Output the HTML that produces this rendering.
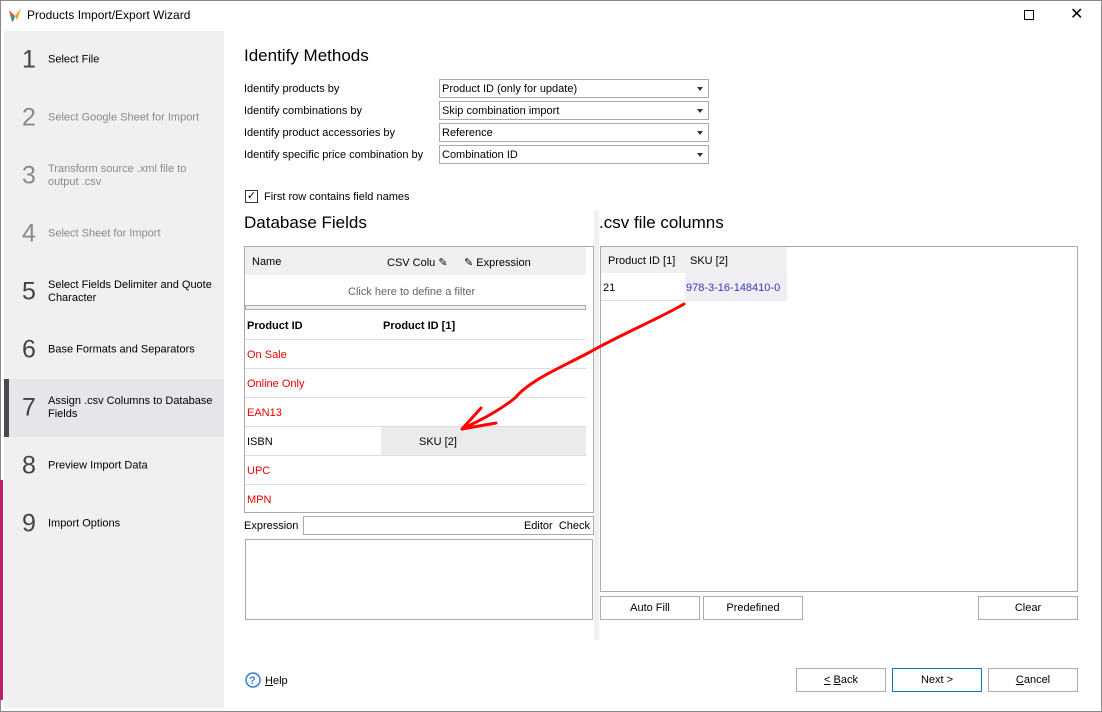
<!DOCTYPE html><html><head><style>
*{margin:0;padding:0;box-sizing:border-box}
body{width:1102px;height:712px;position:relative;background:#fff;font-family:"Liberation Sans",Tahoma,sans-serif;font-size:11px;color:#000;overflow:hidden}
.a{position:absolute}
.side{left:4px;top:31px;width:220px;height:677px;background:#f0f0f0}
.st{position:absolute;left:0;width:220px;height:52px}
.st .n{position:absolute;left:18px;font-size:25px;color:#444;top:50%;transform:translateY(-50%)}
.st .t{position:absolute;left:44px;top:50%;transform:translateY(-50%);font-size:11px;line-height:13px;width:172px}
.dis .n,.dis .t{color:#8a8a8a}
.dd{position:absolute;left:439px;width:270px;height:19px;border:1px solid #aaa;padding:3px 0 0 2px;font-size:11px}
.dd:after{content:"";position:absolute;right:5px;top:7px;border:3px solid transparent;border-top:4px solid #333}
.lbl{position:absolute;left:244px;font-size:11px}
.row{position:absolute;left:245px;width:341px;height:29px;border-bottom:1px solid #ddd}
.row span{position:absolute;left:2px;top:9px}
.red{color:#e00}
.btn{position:absolute;height:24px;border:1px solid #adadad;background:#fff;text-align:center;line-height:23px;font-size:11px}
</style></head><body>
<div class="a" style="left:0;top:0;width:1102px;height:712px;border:1px solid #888"></div>
<svg class="a" style="left:8px;top:7px" width="14" height="16" viewBox="0 0 14 16"><path d="M1 3 L7 9 L4 15 Z" fill="#e85030"/><path d="M13 1 L7 9 L9 13 Z" fill="#f0a020"/><path d="M2 8 L7 10 L5 15Z" fill="#20a0a0"/></svg>
<div class="a" style="left:27px;top:8px;font-size:12px">Products Import/Export Wizard</div>
<div class="a" style="left:1024px;top:10px;width:10px;height:10px;border:1px solid #000"></div>
<div class="a" style="left:1070px;top:4px;font-size:16px">✕</div>
<div class="a" style="left:0;top:480px;width:3px;height:220px;background:#c0206a"></div>
<div class="a side">
<div class="st" style="top:3px"><span class="n">1</span><span class="t">Select File</span></div>
<div class="st dis" style="top:61px"><span class="n">2</span><span class="t">Select Google Sheet for Import</span></div>
<div class="st dis" style="top:119px"><span class="n">3</span><span class="t" style="width:150px">Transform source .xml file to output .csv</span></div>
<div class="st dis" style="top:177px"><span class="n">4</span><span class="t">Select Sheet for Import</span></div>
<div class="st" style="top:235px"><span class="n">5</span><span class="t">Select Fields Delimiter and Quote Character</span></div>
<div class="st" style="top:293px"><span class="n">6</span><span class="t">Base Formats and Separators</span></div>
<div class="st" style="top:348px;height:58px;background:#e6e6ea;border-left:5px solid #4a4a55"><span class="n" style="left:13px">7</span><span class="t" style="left:39px">Assign .csv Columns to Database Fields</span></div>
<div class="st" style="top:409px"><span class="n">8</span><span class="t">Preview Import Data</span></div>
<div class="st" style="top:467px"><span class="n">9</span><span class="t">Import Options</span></div>
</div>
<div class="a" style="left:244px;top:46px;font-size:17px">Identify Methods</div>
<div class="lbl" style="top:83px">Identify products by</div>
<div class="lbl" style="top:105px">Identify combinations by</div>
<div class="lbl" style="top:127px">Identify product accessories by</div>
<div class="lbl" style="top:149px">Identify specific price combination by</div>
<div class="dd" style="top:79px">Product ID (only for update)</div>
<div class="dd" style="top:101px">Skip combination import</div>
<div class="dd" style="top:123px">Reference</div>
<div class="dd" style="top:145px">Combination ID</div>
<div class="a" style="left:245px;top:190px;width:13px;height:13px;border:1px solid #333;font-size:11px;line-height:11px;text-align:center">✓</div>
<div class="a" style="left:264px;top:191px">First row contains field names</div>
<div class="a" style="left:244px;top:213px;font-size:17px">Database Fields</div>
<div class="a" style="left:599px;top:213px;font-size:17px">.csv file columns</div>
<div class="a" style="left:244px;top:246px;width:350px;height:267px;border:1px solid #aaa"></div>
<div class="a" style="left:245px;top:247px;width:341px;height:28px;background:#f0f0f0"></div>
<div class="a" style="left:252px;top:256px">Name</div>
<div class="a" style="left:387px;top:256px">CSV Colu ✎</div>
<div class="a" style="left:464px;top:256px">✎ Expression</div>
<div class="a" style="left:348px;top:286px;color:#666">Click here to define a filter</div>
<div class="a" style="left:245px;top:305px;width:341px;height:5px;border:1px solid #aaa;background:#f0f0f0"></div>
<div class="row" style="top:311px"><span style="font-weight:bold">Product ID</span><span style="left:138px;font-weight:bold">Product ID [1]</span></div>
<div class="row" style="top:340px"><span class="red">On Sale</span></div>
<div class="row" style="top:369px"><span class="red">Online Only</span></div>
<div class="row" style="top:398px"><span class="red">EAN13</span></div>
<div class="row" style="top:427px"><span>ISBN</span><div class="a" style="left:136px;top:0;width:205px;height:28px;background:#ebebeb"></div><span style="left:174px">SKU [2]</span></div>
<div class="row" style="top:456px"><span class="red">UPC</span></div>
<div class="row" style="top:485px;border:0"><span class="red">MPN</span></div>
<div class="a" style="left:244px;top:520px">Expression</div>
<div class="a" style="left:303px;top:516px;width:291px;height:19px;border:1px solid #aaa;text-align:right;padding:3px 3px 0 0">Editor&nbsp; Check</div>
<div class="a" style="left:245px;top:539px;width:348px;height:81px;border:1px solid #aaa"></div>
<div class="a" style="left:594px;top:210px;width:5px;height:430px;background:#f0f0f0"></div>
<div class="a" style="left:596px;top:420px;font-size:9px">⋮</div>
<div class="a" style="left:600px;top:246px;width:478px;height:346px;border:1px solid #aaa"></div>
<div class="a" style="left:601px;top:247px;width:186px;height:26px;background:#f0f0f0"></div>
<div class="a" style="left:608px;top:255px">Product ID [1]</div>
<div class="a" style="left:690px;top:255px">SKU [2]</div>
<div class="a" style="left:601px;top:273px;width:186px;height:28px;border-bottom:1px solid #ddd"></div>
<div class="a" style="left:685px;top:273px;width:102px;height:28px;background:#eeeef4"></div>
<div class="a" style="left:603px;top:282px">21</div>
<div class="a" style="left:686px;top:282px;color:#3a3ab0">978-3-16-148410-0</div>
<div class="btn" style="left:600px;top:596px;width:100px">Auto Fill</div>
<div class="btn" style="left:703px;top:596px;width:100px">Predefined</div>
<div class="btn" style="left:978px;top:596px;width:100px">Clear</div>
<svg class="a" style="left:0;top:0" width="1102" height="712"><path d="M684 304 C660 318 620 335 590 352 C560 368 530 380 515 398 C500 410 485 418 462 429 M462 429 L481 408 M462 429 L496 423" stroke="#f00" stroke-width="3" fill="none" stroke-linecap="round"/>
<circle cx="253" cy="680" r="7" fill="none" stroke="#3a7bd5" stroke-width="1.5"/><text x="249" y="684" font-size="11" font-weight="bold" fill="#3a7bd5" font-family="Liberation Sans">?</text></svg>
<div class="a" style="left:265px;top:675px"><u>H</u>elp</div>
<div class="btn" style="left:796px;top:668px;width:90px"><u>&lt;</u> <u>B</u>ack</div>
<div class="btn" style="left:892px;top:668px;width:90px;border-color:#0078d7">Next &gt;</div>
<div class="btn" style="left:988px;top:668px;width:90px"><u>C</u>ancel</div>
</body></html>
